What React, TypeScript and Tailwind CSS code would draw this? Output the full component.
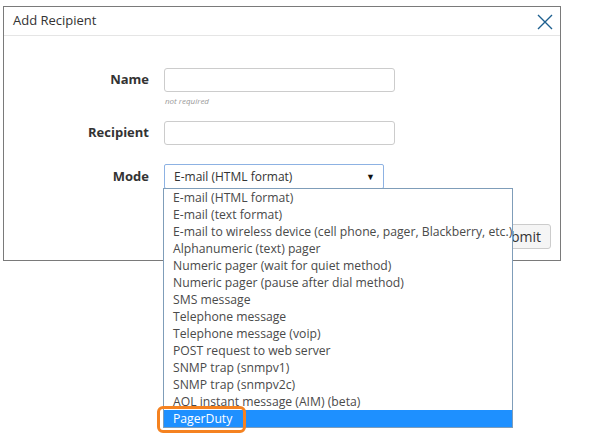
import React from "react";

const modes = [
  "E-mail (HTML format)",
  "E-mail (text format)",
  "E-mail to wireless device (cell phone, pager, Blackberry, etc.)",
  "Alphanumeric (text) pager",
  "Numeric pager (wait for quiet method)",
  "Numeric pager (pause after dial method)",
  "SMS message",
  "Telephone message",
  "Telephone message (voip)",
  "POST request to web server",
  "SNMP trap (snmpv1)",
  "SNMP trap (snmpv2c)",
  "AOL instant message (AIM) (beta)",
  "PagerDuty",
];

export default function App() {
  const selected = "PagerDuty";

  return (
    <div
      className="relative w-[595px] h-[444px] bg-white text-[#333]"
      style={{ fontFamily: '"Open Sans", "Liberation Sans", sans-serif' }}
    >
      {/* Dialog */}
      <div className="absolute left-[3px] top-[6px] w-[558px] h-[255px] border border-[#7a7a7a] bg-white flex flex-col">
        <div className="h-[29px] flex items-center justify-between border-b border-[#e5e5e5] pl-[9px] pr-[7px]">
          <span className="text-[13px] text-[#333]">Add Recipient</span>
          <svg width="16" height="16" viewBox="0 0 16 16" className="mt-[1px]">
            <path d="M1 1 L15 15 M15 1 L1 15" stroke="#1d5f8f" strokeWidth="1.4" />
          </svg>
        </div>

        <div className="flex-1 flex flex-col pt-[32px]">
          {/* Name */}
          <div className="flex items-center">
            <label className="w-[145px] text-right text-[13px] font-bold text-[#333]">Name</label>
            <input className="ml-[15px] w-[231px] h-[24px] border border-[#ccc] rounded-[3px]" />
          </div>
          <div className="ml-[161px] mt-[4px] text-[8px] italic text-[#999] leading-[10px]">not required</div>

          {/* Recipient */}
          <div className="flex items-center mt-[15px]">
            <label className="w-[145px] text-right text-[13px] font-bold text-[#333]">Recipient</label>
            <input className="ml-[15px] w-[231px] h-[24px] border border-[#ccc] rounded-[3px]" />
          </div>

          {/* Mode */}
          <div className="flex items-center mt-[19px]">
            <label className="w-[145px] text-right text-[13px] font-bold text-[#333]">Mode</label>
            <div className="ml-[15px] w-[220px] h-[25px] border border-[#8db2e3] rounded-[2px] flex items-center justify-between pl-[9px] pr-[8px]">
              <span className="text-[12px] text-[#333]">E-mail (HTML format)</span>
              <span className="text-[9px] text-[#111]">▼</span>
            </div>
          </div>

          <div className="flex justify-end pr-[9px] mt-[35px]">
            <button className="h-[25px] pl-[10px] pr-[9px] border border-[#ccc] rounded-[3px] bg-[#f5f5f5] text-[14px] text-[#333]">
              Submit
            </button>
          </div>
        </div>
      </div>

      {/* Open select list */}
      <div className="absolute left-[163px] top-[188px] w-[350px] border border-[#7f9db9] bg-white">
        {modes.map((m) => (
          <div
            key={m}
            className={`h-[17px] leading-[17px] pl-[9px] text-[12.2px] whitespace-nowrap ${
              m === selected ? "bg-[#1e90ff] text-white" : "text-[#4a4a4a]"
            }`}
          >
            {m}
          </div>
        ))}
      </div>

      {/* Annotation */}
      <div className="absolute left-[157px] top-[406px] w-[89px] h-[27px] border-[3px] border-[#f58220] rounded-[6px]" />
    </div>
  );
}
